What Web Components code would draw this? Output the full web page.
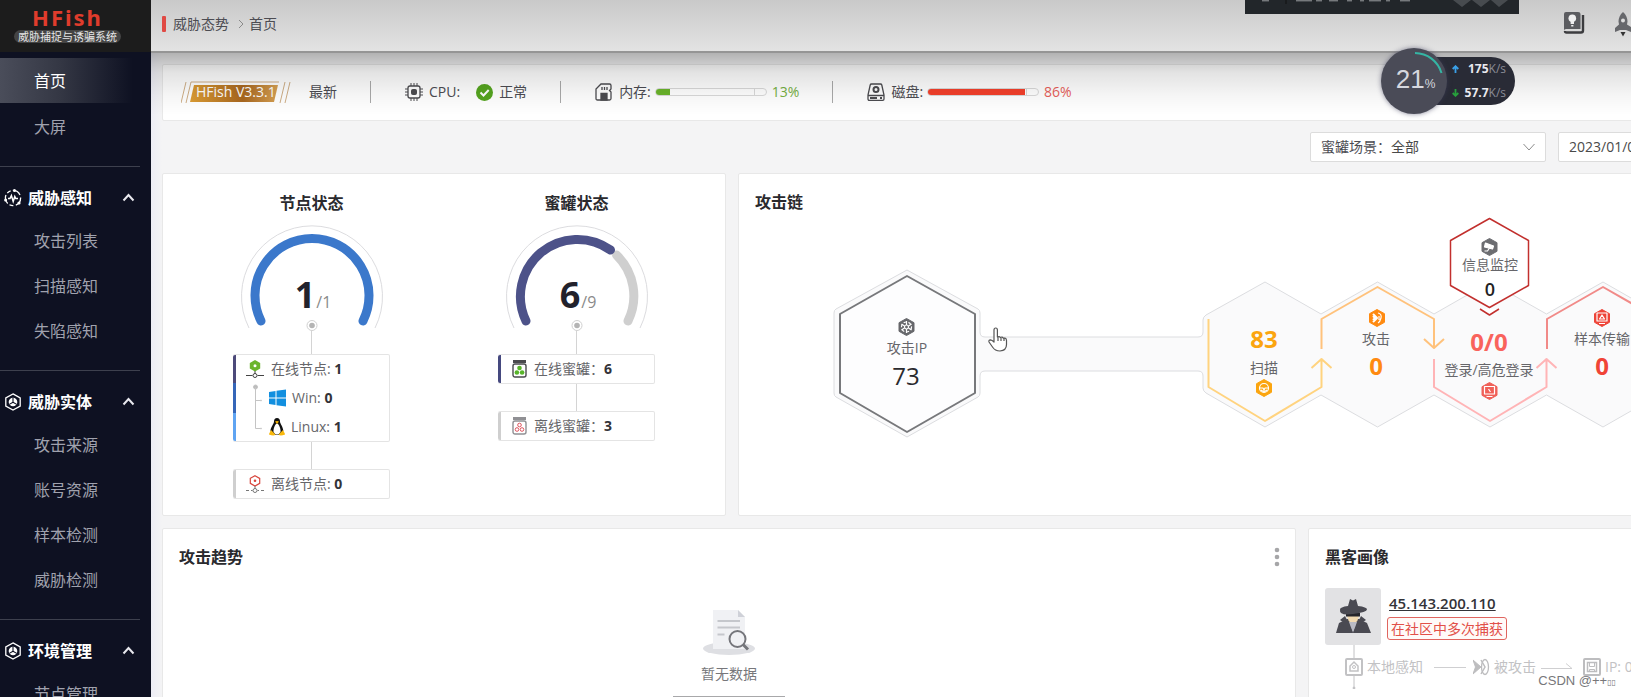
<!DOCTYPE html>
<html lang="zh-CN">
<head>
<meta charset="utf-8">
<title>HFish</title>
<style>
html,body{margin:0;height:100%}
body{font:14px/20px "Open Sans","Noto Sans CJK SC",sans-serif;color:#4c4c52;background:#f4f4f5;overflow:hidden}
</style>
</head>
<body>
<hfish-app></hfish-app>
<script>
const BASE='*{box-sizing:border-box}svg{display:block;flex:none}a{color:inherit;text-decoration:none}h2,h3,p,ul{margin:0;padding:0;list-style:none}';
function define(name,css,html){
  customElements.define(name,class extends HTMLElement{
    constructor(){super();this.attachShadow({mode:'open'});}
    connectedCallback(){
      if(this.shadowRoot.firstChild)return;
      const t=document.createElement('template');
      t.innerHTML='<style>'+BASE+css+'</style>'+(typeof html==='function'?html(this):html);
      this.shadowRoot.append(t.content.cloneNode(true));
    }
  });
}

/* ---------- sidebar ---------- */
const sense='<svg width="18" height="18" viewBox="0 0 18 18" fill="none" stroke="#fff"><circle cx="9" cy="9" r="7.6" stroke-width="1.3" stroke-dasharray="9 2.5 4 2.2"/><path d="M4 9.5h2l1.4-3 1.8 6 1.6-5 1 2H14" stroke-width="1.5"/><circle cx="10.5" cy="1.6" r="1.5" fill="#fff" stroke="none"/><circle cx="1.6" cy="11" r="1.5" fill="#fff" stroke="none"/><circle cx="15" cy="14" r="1.6" fill="#fff" stroke="none"/></svg>';
const cube='<svg width="18" height="18" viewBox="0 0 18 18" fill="none" stroke="#fff"><path d="M9 .9l7.2 4v8.200L9 17.100l-7.200-4V4.900z" stroke-width="1.300"/><circle cx="9" cy="9" r="4.300" fill="#fff" stroke="none"/><path d="M9 4.700v4.500M9 9.200l-3.700 2.200M9 9.200l3.700 2.200" stroke="#0e1122" stroke-width="1.100"/></svg>';
define('nav-group',`
:host{display:block;margin-top:17px;color:#a4a6b2}
.rule{height:1px;background:#3d404e;margin-right:11px}
h2{margin-top:10px;height:41px;display:flex;align-items:center;font-size:16px;line-height:24px;color:#fff;padding:0 16px 0 4px}
h2 span{margin-left:6px;flex:1}
slot{display:block}
`,el=>`<div class="rule"></div><h2>${el.getAttribute('icon')==='sense'?sense:cube}<span>${el.getAttribute('label')}</span><svg width="13" height="9" viewBox="0 0 13 9" fill="none" stroke="#e8e8ee" stroke-width="2"><path d="M1.500 7.500l5-5.500 5 5.500"/></svg></h2><slot></slot>`);
define('nav-item',`
:host{display:block}
a{display:flex;align-items:center;height:45px;padding-left:34px;font-size:16px;line-height:24px;color:#a0a2ae}
:host([active]) a{color:#fff;background:linear-gradient(90deg,#4a4d5a 0,#343744 40%,#0e1122 88%)}
`,`<a href="#"><slot></slot></a>`);
define('app-sidebar',`
:host{display:block;width:151px;flex:none;background:#0e1122;overflow:hidden;position:relative}
.logo{height:52px;background:#1c1c1c;display:flex;flex-direction:column;align-items:center;padding:5px 16px 0 0}
.logo b{font:bold 22px/24px "Noto Sans",sans-serif;letter-spacing:2px;color:#e03c2c}
.logo span{font-size:11px;line-height:13px;color:#e6e6e6;background:#444;border-radius:7px;padding:0 4px;margin-top:1px}
.home{display:flex;flex-direction:column;gap:1px;padding-top:6px}
`,`<div class="logo"><b>HFish</b><span>威胁捕捉与诱骗系统</span></div>
<nav><div class="home"><nav-item active>首页</nav-item><nav-item>大屏</nav-item></div>
<nav-group icon="sense" label="威胁感知"><nav-item>攻击列表</nav-item><nav-item>扫描感知</nav-item><nav-item>失陷感知</nav-item></nav-group>
<nav-group label="威胁实体"><nav-item>攻击来源</nav-item><nav-item>账号资源</nav-item><nav-item>样本检测</nav-item><nav-item>威胁检测</nav-item></nav-group>
<nav-group label="环境管理"><nav-item>节点管理</nav-item></nav-group></nav>`);

/* ---------- top header ---------- */
define('app-header',`
:host{display:flex;align-items:center;height:53px;padding:0 0 4px 11px;background:linear-gradient(#c9c9c9,#e3e3e3);border-bottom:2px solid #959595;position:relative}
:host::after{content:"";position:absolute;left:0;right:0;top:53px;height:62px;background:linear-gradient(rgba(0,0,0,.27),rgba(0,0,0,.18) 16%,rgba(0,0,0,.11) 32%,rgba(0,0,0,.04) 68%,transparent);pointer-events:none}
i{width:4px;height:16px;background:#e04a44;border-radius:1px;margin-right:7px}
.sep{margin:0 5px 0 9px}
.tools{margin-left:auto;display:flex;gap:29px}
`,`<i></i><a href="#">威胁态势</a><svg class="sep" width="6" height="10" viewBox="0 0 6 10" fill="none" stroke="#8a8a8a"><path d="M1 1l4 4-4 4"/></svg><a href="#">首页</a>
<div class="tools">
<svg width="22" height="24" viewBox="0 0 22 24"><path d="M20 4v15.500q0 2-2 2H3.500Q2 21.500 2 20" fill="none" stroke="#3c3c3f" stroke-width="2.400"/><path d="M3 1h12q2.500 0 2.500 2v15H3q-2 0-2 1.800V3q0-2 2-2z" fill="#5b5c60"/><circle cx="9.300" cy="7.300" r="3.800" fill="#f0f0f0"/><path d="M7.600 10h3.400v3H7.600zM8.200 14h2.200v1.500H8.200z" fill="#eee"/></svg>
<svg width="17" height="26" viewBox="0 0 17 26"><path d="M9 1c3 2.500 4.500 6 4.500 9.500l-.5 3L17 16v5l-5-2H6l-5 2v-4l4-3.500-.5-3C4.500 7 6 3.500 9 1z" fill="#66676b"/><circle cx="9" cy="9.500" r="2" fill="#ddd"/><path d="M6.500 21h5L9 25.500z" fill="#333"/></svg></div>`);

/* ---------- status strip ---------- */
define('usage-meter',`
:host{display:block;width:112px;height:8px;border:1px solid #d9d9d9;border-radius:4px;overflow:hidden;background:linear-gradient(90deg,transparent 98px,#d9d9d9 98px,#d9d9d9 99px,transparent 99px)}
div{height:100%}
`,el=>`<div role="progressbar" aria-label="${el.getAttribute('label')}" aria-valuenow="${el.getAttribute('value')}" style="width:${el.getAttribute('value')}%;background:${el.getAttribute('color')}"></div>`);
define('status-bar',`
:host{display:flex;align-items:center;height:57px;background:#fff;border:1px solid #e8e8e8;border-radius:2px;padding:0 0 1px 18px}
.cell{display:flex;align-items:center}
.badge{display:grid;width:110px;height:24px;align-items:center}
.badge>*{grid-area:1/1}
.badge span{padding-left:15px;color:#fff}
.new{margin-left:18px}
hr{width:1px;height:22px;background:#aaa;border:0;margin:0 34px 0 33px}
.cell svg{margin-right:6px}
usage-meter{margin:0 5px 0 4px}
.cell .badge svg{margin:0}
.cell .ok{margin-left:16px}
`,`<div class="cell"><div class="badge"><svg width="110" height="24" viewBox="0 0 110 24"><defs><linearGradient id="g"><stop stop-color="#dc9c33"/><stop offset=".6" stop-color="#a9671f"/><stop offset="1" stop-color="#d6a052"/></linearGradient></defs><path d="M13 5h84l-4 17H9z" fill="url(#g)"/><path d="M10 2h88M10 2L5 23M5 2L0 23M104 2l-5 21M109 2l-5 21" stroke="#cfae85" fill="none"/></svg><span>HFish V3.3.1</span></div><span class="new">最新</span></div><hr>
<div class="cell"><svg width="18" height="18" viewBox="0 0 18 18" fill="none" stroke="#4c4c50"><rect x="3" y="3" width="12" height="12" rx="2" stroke-width="1.300"/><rect x="6.500" y="6.500" width="5" height="5" rx="1" fill="#4c4c50"/><path d="M6 0v3M9 0v3M12 0v3M6 15v3M9 15v3M12 15v3M0 6h3M0 9h3M0 12h3M15 6h3M15 9h3M15 12h3"/></svg>CPU:<svg class="ok" width="17" height="17" viewBox="0 0 17 17"><circle cx="8.500" cy="8.500" r="8.500" fill="#55a51f"/><path d="M4.500 8.500l3 3 5.200-5.500" fill="none" stroke="#fff" stroke-width="2"/></svg>正常</div><hr>
<div class="cell"><svg width="18" height="18" viewBox="0 0 18 18" fill="none" stroke="#4c4c50" stroke-width="1.300"><path d="M6 1h8.500q1.500 0 1.500 1.500V6l-1.500 1.500L16 9v6.500q0 1.500-1.500 1.500h-12Q1 17 1 15.500V6z"/><path d="M7 4v3M9.500 4v3M12 4v3"/><path d="M6 10.500h6V17H6z" fill="#4c4c50"/></svg>内存:<usage-meter label="内存" value="13" color="#6ab42a"></usage-meter><span style="color:#76b043">13%</span></div><hr>
<div class="cell"><svg width="18" height="18" viewBox="0 0 18 18" fill="none" stroke="#4c4c50" stroke-width="1.300"><path d="M4.500 1h9q1 0 1.300 1L17 12v4q0 1.300-1.300 1.300H2.300Q1 17.300 1 16v-4L3.200 2q.3-1 1.300-1zM1.300 12.500h15.400"/><circle cx="9" cy="6.500" r="2.500" stroke-width="2"/><path d="M3 15h7M13 15h2" stroke-width="1.800"/></svg>磁盘:<usage-meter label="磁盘" value="88" color="#f4402b"></usage-meter><span style="color:#e8605a">86%</span></div>`);

/* ---------- filters ---------- */
define('filter-row',`
:host{display:flex;justify-content:flex-end;gap:12px;padding:11px 0}
.box{display:flex;align-items:center;height:30px;border:1px solid #dcdcdc;border-radius:2px;background:#fff;padding:0 10px}
.scene{width:236px}.date{width:350px}
select,input{appearance:none;border:0;background:none;padding:0;margin:0;font:inherit;color:#4a4a4a;flex:1;min-width:0;outline:0}
`,`<label class="box scene">蜜罐场景：<select><option>全部</option></select><svg width="12" height="8" viewBox="0 0 12 8" fill="none" stroke="#8c8c8c"><path d="M.5 1L6 7l5.500-6"/></svg></label>
<label class="box date"><input aria-label="日期" value="2023/01/01"></label>`);

/* ---------- cards ---------- */
define('x-card',`
:host{display:block;background:#fff;border:1px solid #e8e8e8;border-radius:2px;min-width:0;overflow:hidden}
header{display:flex;justify-content:space-between;align-items:center;padding:15px 16px 0;height:41px}
h2{font-size:16px;line-height:26px;color:#2a2a2e}
`,el=>(el.getAttribute('label')?`<header><h2>${el.getAttribute('label')}</h2><slot name="action"></slot></header>`:'')+'<slot></slot>');

define('status-gauge',`
:host{display:flex;flex-direction:column;align-items:center;width:265px}
h3{font-size:16px;line-height:26px;color:#2a2a2e;margin:16px 0 7px}
.dial{display:grid;width:144px;height:108px}
.dial>*{grid-area:1/1}
p{display:flex;align-items:baseline;justify-content:center;padding:48px 0 0 3px;line-height:48px}
p b{font-size:36px;color:#22222c}p span{font-size:16px;color:#8a8a8a;margin-left:1px}
`,el=>`<h3>${el.getAttribute('label')}</h3><div class="dial"><svg width="144" height="108" viewBox="-72 -73 144 108" fill="none"><path d="M-63 32A70.500 70.500 0 1 1 63 32" stroke="#dcdcdf"/>
  ${el.hasAttribute('partial')?'<path d="M39.500 -41A57 57 0 0 1 51 25" stroke="#cfcfcf" stroke-width="9" stroke-linecap="round"/><path d="M-51 25A57 57 0 0 1 33.500 -46" stroke="#4d5289" stroke-width="9" stroke-linecap="round"/>':'<path d="M-51 25A57 57 0 1 1 51 25" stroke="#3b78cb" stroke-width="9" stroke-linecap="round"/>'}
  <circle cx="0" cy="29.500" r="5" stroke="#d0d0d0"/><circle cx="0" cy="29.500" r="2.800" fill="#b4b4b4"/></svg><p><b>${el.getAttribute('value')}</b><span>/${el.getAttribute('total')}</span></p></div><slot></slot>`);
define('stat-box',`
:host{display:flex;flex-direction:column;align-items:center;width:157px}
:host::before{content:"";width:1px;height:var(--link,27px);background:#d4d4d4}
.box{width:100%;border:1px solid #e4e4e4;border-left:0;border-radius:2px;display:grid;grid-template-columns:3px 1fr}
.edge{background:var(--edge,#cfcfcf);border-radius:2px 0 0 2px}
`,`<div class="box"><div class="edge"></div><div><slot></slot></div></div>`);
define('stat-row',`
:host{display:flex;align-items:center;height:var(--row,28px);gap:7px;padding-left:10px;color:#66666a;white-space:nowrap}
:host([sub]){padding-left:13px;gap:6px;--row:29px}
b{color:#333338}
slot[name=icon]{display:block;flex:none}
`,`<slot name="icon"></slot><span><slot></slot><b><slot name="n"></slot></b></span>`);

const nodeOn='<svg slot="icon" width="18" height="18" viewBox="0 0 18 18"><path d="M9 0l5.200 3v5.500L9 11.500l-5.200-3V3z" fill="#6cb52d"/><circle cx="9" cy="5.700" r="1.500" fill="#fff"/><path d="M9 11v3M0 15.500h6.500M11.500 15.500H18" stroke="#444"/><circle cx="9" cy="15.500" r="2" fill="none" stroke="#444"/></svg>';
const nodeOff='<svg slot="icon" width="18" height="18" viewBox="0 0 18 18" fill="none"><path d="M9 .7l4.700 2.700v5L9 11l-4.700-2.700v-5z" stroke="#d8453c" stroke-width="1.200"/><circle cx="9" cy="5.800" r="1.300" fill="#d8453c"/><path d="M9 11v3M0 15.500h3m2 0h1.500M11.500 15.500H13m2 0h3" stroke="#777"/><circle cx="9" cy="15.500" r="2" stroke="#777"/></svg>';
const win='<svg width="17" height="18" viewBox="0 0 17 18" fill="#128fdf"><path d="M0 3l6.500-1v6.500H0zM7.500 1.800L17 .4v8.100H7.500zM0 9.500h6.500V16L0 15zM7.500 9.500H17v8.100l-9.500-1.400z"/></svg>';
const tux='<svg width="16" height="18" viewBox="0 0 16 18"><path d="M8 0c2 0 3 1.500 3 3.500 0 2.200 3.300 5.500 3.300 9.500L12 17H4l-2.500-4C1.500 9 5 6 5 3.500 5 1.500 6 0 8 0z" fill="#111"/><path d="M8 5.500c1.500 0 4 5 3.500 8.500L9.500 16.500h-3L4.500 14C4 10.500 6.500 5.500 8 5.500z" fill="#fff"/><path d="M6 3.500q2-1 4 0L8 6z" fill="#f7b500"/><path d="M0 16l2-4 4.500 4.500Q5 18.500 0 16.500zM16 16l-2-4-4.500 4.500q1.500 2 6.500 0z" fill="#f9b80c"/></svg>';
const jar=(lid,inner)=>`<svg slot="icon" width="15" height="18" viewBox="0 0 15 18"><path d="M1 0h13v3H1z" fill="${lid}"/><rect x="1" y="4" width="13" height="13" rx="2" fill="none" stroke="${lid}" stroke-width="1.400"/>${inner}</svg>`;
const jarOn=jar('#4a4a4e','<g fill="#58b52a"><circle cx="7.500" cy="8" r="2.300"/><circle cx="4.900" cy="12.500" r="2.300"/><circle cx="10.100" cy="12.500" r="2.300"/></g>');
const jarOff=jar('#909094','<g fill="none" stroke="#e05560"><circle cx="7.500" cy="8" r="1.800"/><circle cx="5" cy="12.500" r="1.800"/><circle cx="10" cy="12.500" r="1.800"/></g>');
define('node-panel',`
:host{display:flex;justify-content:center;height:100%}
.first{--link:23px;--edge:linear-gradient(#4d4a7a 33%,#3566b8 33% 67%,#5fa4f2 67%)}
.pot{--link:23px;--edge:#45497f}
.tree{display:grid;grid-template-columns:20px 1fr}
.tree>svg{margin-left:10px}
.pots{padding-left:11px}
`,`<status-gauge label="节点状态" value="1" total="1"><stat-box class="first"><stat-row>${nodeOn}在线节点: <span slot="n">1</span></stat-row><div class="tree"><svg width="16" height="58" viewBox="0 0 16 58" fill="none" stroke="#c4c4c4"><circle cx="9.500" cy="4" r="2" fill="#bbb"/><path d="M9.500 4v41.500h5M9.500 17.500h5"/><circle cx="15" cy="17.500" r=".5"/><circle cx="15" cy="45.500" r=".5"/></svg><div><stat-row sub><span slot="icon">${win}</span>Win: <span slot="n">0</span></stat-row><stat-row sub><span slot="icon">${tux}</span>Linux: <span slot="n">1</span></stat-row></div></div></stat-box>
<stat-box><stat-row>${nodeOff}离线节点: <span slot="n">0</span></stat-row></stat-box></status-gauge>
<status-gauge label="蜜罐状态" value="6" total="9" partial><stat-box class="pot"><stat-row class="pots">${jarOn}在线蜜罐：<span slot="n">6</span></stat-row></stat-box>
<stat-box><stat-row class="pots">${jarOff}离线蜜罐：<span slot="n">3</span></stat-row></stat-box></status-gauge>`);

/* ---------- attack chain ---------- */
const hexIcon=(x,y,c,inner)=>`<g transform="translate(${x} ${y})"><path d="M0-8.500l7.500 4.200v8.600L0 8.500l-7.500-4.200v-8.600z" fill="${c}" stroke="${c}" stroke-linejoin="round"/><g fill="none" stroke="#fff" stroke-width="1.200">${inner}</g></g>`;
define('attack-chain',`
:host{display:block}
text{text-anchor:middle;font-size:14px;fill:#66666a}
.n{font-size:24px;font-weight:700}
`,`<svg width="1169" height="285" viewBox="739 215 1169 285" fill="none" stroke-linejoin="round">
<path d="M907 270L978 309q2 1 2 4V332q0 5 5 5H1198q5 0 5-5V320q0-3 3-5L1265 282L1321 314L1377.500 282L1434 314L1490 282L1546.500 314L1603 282L1659 314L1715 282L1772 314V395L1715 427L1659 395L1603 427L1546.500 395L1490 427L1434 395L1377.500 427L1321 395L1265 427L1206 393q-3-2-3-5V376q0-5-5-5H985q-5 0-5 5V393q0 3-2 4L907 437L836 397q-2-1-2-4V313q0-3 2-4z" fill="#fafafb" stroke="#dcdde0"/>
<path d="M907 276l68 38v79l-68 39-67-39v-79z" fill="#fdfdfe" stroke="#77787b" stroke-width="2"/>
<g stroke-width="2"><path d="M1208.500 319v68l56.500 34 56.500-34v-28M1311.500 368l10-9 10 9" stroke="#ffd37f"/>
<path d="M1321.500 349v-30l56-32 56.500 32v29M1424 339l10 9 10-9" stroke="#ffc27c"/>
<path d="M1434 359v28l56 34 56.500-34v-28M1536.500 368l10-9 10 9" stroke="#ffb4b6"/>
<path d="M1547 349v-30l56-32 56 32v29" stroke="#f18a88"/></g>
<path d="M1489.500 218.500l39 22v45l-39 22-39-22v-45zM1480 309l9.500 6 9.500-6" fill="#fff" stroke="#c2302e" stroke-width="1.500"/>
${hexIcon(906.5,327,'#66676b','<circle r="2"/><path d="M0-6v4M0 6V2M-5-3l3 2M5 3L2 1M-5 3l3-2M5-3L2-1"/><circle r="5" stroke-dasharray="3 2"/>')}
<text x="907" y="353">攻击IP</text><text x="906" y="385" style="font-size:24px;fill:#2a2a2e">73</text>
<text class="n" x="1264" y="348" style="fill:#fba50f">83</text><text x="1264" y="373">扫描</text>
${hexIcon(1264,388,'#fba50f','<circle r="4.500"/><path d="M-5 0h4l1 2 1-2h4M-3 2q3 3 6 0"/>')}
${hexIcon(1377,318,'#ff8a10','<path d="M-4-4l4 4-4 4M-4-2l2 2-2 2" stroke-width="2"/><path d="M1-5q4 1 3 5t-3 5M2-2v4"/>')}
<text x="1376" y="344">攻击</text><text class="n" x="1376" y="375" style="fill:#ff8a10">0</text>
${hexIcon(1489.5,247,'#6c6d71','<path d="M-4-4l8 3-1 3-8-2z" fill="#fff"/><path d="M-5 4h3l2-3"/>')}
<text x="1490" y="270">信息监控</text><text x="1490" y="296" style="font-size:18px;font-weight:600;fill:#222">0</text>
<text class="n" x="1489" y="351" style="fill:#f9635c">0/0</text><text x="1489" y="375">登录/高危登录</text>
${hexIcon(1489.5,391,'#f06058','<rect x="-5" y="-4.500" width="10" height="7.500"/><path d="M-1-2l2 3M-3 5.500h6"/>')}
${hexIcon(1602,318,'#ee4438','<rect x="-5" y="-5" width="10" height="8"/><path d="M0-3l-2.500 4h5zM-3 5.500h6"/>')}
<text x="1602" y="344">样本传输</text><text class="n" x="1602" y="375" style="fill:#f04436">0</text>
<path d="M994 342v-12q0-2 1.700-2t1.700 2v7l1.600-.5 1.500 1 1.500-.5 1.500 1.200 1.500-.2q1.500.5 1.500 2.500v4q0 6-6.500 6.500-5 0-7.500-4l-3.500-5q-.5-2 1.500-2.200 1.500.2 3.500 2.200zM998 337v4M1001 338v3M1004 338v3" fill="#fff" stroke="#555" stroke-width="1.200"/>
</svg>`);

/* ---------- bottom cards ---------- */
define('empty-state',`
:host{display:flex;flex-direction:column;align-items:center;padding-top:39px;color:#77777b}
svg{margin-bottom:9px}
.axis{width:112px;height:2px;background:#a8a8aa;margin-top:12px}
`,`<svg width="52" height="46" viewBox="0 0 52 46"><ellipse cx="26" cy="39.500" rx="26" ry="6.500" fill="#dedfe3"/><path d="M10 1h25l7 7v32H10z" fill="#f0f1f4"/><path d="M35 1l7 7h-7z" fill="#cfd1d8"/><path d="M14.500 12H37M14.500 18.500H37M14.500 25.500h7" stroke="#c5c7cc" stroke-width="2"/><circle cx="34.500" cy="30" r="8" fill="#f0f1f4" stroke="#75767b" stroke-width="2"/><path d="M40 35.500l5 5" stroke="#75767b" stroke-width="3"/></svg>暂无数据<div class="axis"></div>`);
define('hacker-card',`
:host{display:block;padding:18px 16px 0}
.who{display:flex;gap:6px}
.avatar{background:#e2e2e4;border-radius:3px}
.who div{padding-top:4px}
.ip{display:block;font-size:15px;line-height:22px;font-weight:600;color:#333338;text-decoration:underline;margin:0 0 3px 2px}
.tag{display:block;border:1px solid #e0655f;border-radius:3px;background:#fffaf8;color:#e25048;line-height:21px;padding:0 3px;width:120px;white-space:nowrap}
.steps{display:flex;align-items:flex-start;padding-left:20px;height:44px;color:#c2c2c4;white-space:nowrap}
.steps>*{margin-top:13px}
.steps span{line-height:18px;margin-left:4px}
.steps .first{margin:0}
.l{margin-left:11px}.k{margin-left:7px}.d{margin-left:5px}.f{margin-left:10px}
`,`<div class="who"><svg class="avatar" width="56" height="57" viewBox="0 0 56 57"><path d="M11 45l3-10 8-4h12l8 4 4 10z" fill="#4a4a52"/><path d="M22 25h12q0 10-6 10t-6-10z" fill="#f1d9b0"/><path d="M21 25h14v3.500H21z" fill="#25252b"/><path d="M24 34h8l-4 11z" fill="#b9bac4"/><path d="M20 28l-5 4 3 2-2 2 12 9-6-13zM36 28l5 4-3 2 2 2-12 9 6-13z" fill="#4a4a52"/><path d="M23 18l2-7 3 1.500L31 11l2 7q9 1 9 3.500T28 26t-13-4.500q0-2.500 8-3.500z" fill="#4a4a52"/></svg>
<div><a class="ip" href="#">45.143.200.110</a><span class="tag">在社区中多次捕获</span></div></div>
<div class="steps"><svg class="first" width="18" height="44" viewBox="0 0 18 44" fill="none" stroke="#c2c2c4"><path d="M9 0v44"/><rect x="1" y="14" width="16" height="16" rx="1" fill="#fff" stroke-width="2"/><path d="M5 26v-5l4-4 4 4v5z" stroke-width="1.500"/><circle cx="9" cy="22" r="1.500"/><circle cx="9" cy="43" r="1" fill="#bbb"/></svg><span>本地感知</span>
<svg class="l" width="32" height="18" viewBox="0 0 32 18" stroke="#cfcfd1"><path d="M0 9.500h32"/></svg><svg class="k" width="17" height="18" viewBox="0 0 17 18" fill="none" stroke="#bdbdbf"><path d="M0 2l8 7-8 7 2.500-7z" fill="#bdbdbf"/><path d="M8 2l4 7-4 7" stroke-width="1.500"/><ellipse cx="12" cy="9" rx="3.500" ry="7.500" stroke-width="1.300"/></svg><span>被攻击</span>
<svg class="d" width="32" height="18" viewBox="0 0 32 18" fill="none" stroke="#cfcfd1"><path d="M0 10.500h31l-6-5"/></svg><svg class="f" width="18" height="18" viewBox="0 0 18 18" fill="none" stroke="#bdbdbf"><rect x="1" y="1" width="16" height="16" rx="1" stroke-width="2"/><path d="M4.500 4.500h9v9h-9z" stroke-width="1.500"/><path d="M6.500 4.500v4h5v-4M6.500 13.500v-2h5v2"/></svg><span>IP: 0</span></div>`);

/* ---------- desktop overlays ---------- */
define('speed-widget',`
:host{position:absolute;top:48px;right:116px;display:flex;align-items:center;color:#e8e8ee}
.ring{display:grid;place-items:center;width:66px;height:66px;border-radius:50%;background:#4a4b57;box-shadow:0 0 5px rgba(60,60,90,.6);z-index:1}
.ring>*{grid-area:1/1}
.ring span{font:26px/30px "Liberation Sans",sans-serif;color:#d6d7de;padding-left:3px}
.ring small{font-size:12px}
.pill{margin-left:-33px;padding:0 9px 0 38px;width:101px;height:48px;border-radius:0 24px 24px 0;background:#292b36;display:flex;flex-direction:column;justify-content:center;font-size:12px;line-height:24px}
.pill div{display:flex;justify-content:flex-end;align-items:center}
.pill svg{margin-right:auto}
.pill i{font-style:normal;font-weight:400;color:#8b8c96}
`,`<div class="ring"><svg width="66" height="66" viewBox="0 0 66 66" fill="none"><path d="M34 5A28 28 0 0 1 60.500 25" stroke="#35b5a4" stroke-width="2"/></svg><span>21<small>%</small></span></div>
<div class="pill"><div><svg width="7" height="8" viewBox="0 0 7 8" fill="none" stroke="#3aa0e8" stroke-width="1.800"><path d="M3.500 8V1.500M.7 4l2.800-2.800L6.300 4"/></svg><b>175</b><i>K/s</i></div><div><svg width="7" height="8" viewBox="0 0 7 8" fill="none" stroke="#27a03c" stroke-width="1.800"><path d="M3.500 0v6.500M.7 4l2.800 2.800L6.300 4"/></svg><b>57.7</b><i>K/s</i></div></div>`);
define('floating-bar',`
:host{position:absolute;top:0;right:112px}
`,`<svg width="274" height="14" viewBox="0 0 274 14"><path d="M0 0h274v14H0z" fill="#22262a"/><path d="M41 0v4" stroke="#111"/><path d="M17 .8h7M51 .8h16M71 .8h6M84 .8h9M102 .8h5M115 .8h4M124 .8h12M141 .8h4M155 .8h10" stroke="#9a9da0"/><path d="M208 0h18l-9 7zM227 0h18l-9 7zM246 0h17l-9 7z" fill="#474b4f"/></svg>`);
define('page-mark',`
:host{position:absolute;right:15px;bottom:4px;font:13px/20px "Liberation Sans","DejaVu Sans",sans-serif;color:#77777a;white-space:nowrap}
small{font-size:8px}
`,`CSDN @++<small>▯▯</small>`);

define('hfish-app',`
:host{display:flex;height:100vh;overflow:hidden;position:relative}
main{flex:1;min-width:0;background:linear-gradient(90deg,#ededf5,#f4f4f5 11px)}
.body{padding:11px 0 0 11px;margin-right:-277px}
.row{display:grid;gap:12px;margin-bottom:12px}
.top{grid-template-columns:564fr 1170fr;height:343px}
.bottom{grid-template-columns:1134fr 600fr;height:340px}
button{border:0;background:none;padding:0;margin-right:-3px}
`,`<app-sidebar></app-sidebar><main><app-header></app-header><div class="body"><status-bar></status-bar><filter-row></filter-row>
<div class="row top"><x-card><node-panel></node-panel></x-card><x-card label="攻击链"><attack-chain></attack-chain></x-card></div>
<div class="row bottom"><x-card label="攻击趋势"><button slot="action" aria-label="更多"><svg width="10" height="20" viewBox="0 0 10 20" fill="#a6a6a8"><circle cx="5" cy="3" r="2.300"/><circle cx="5" cy="10" r="2.300"/><circle cx="5" cy="17" r="2.300"/></svg></button><empty-state></empty-state></x-card><x-card label="黑客画像"><hacker-card></hacker-card></x-card></div></div></main>
<floating-bar></floating-bar><speed-widget></speed-widget><page-mark></page-mark>`);
</script>
</body>
</html>
